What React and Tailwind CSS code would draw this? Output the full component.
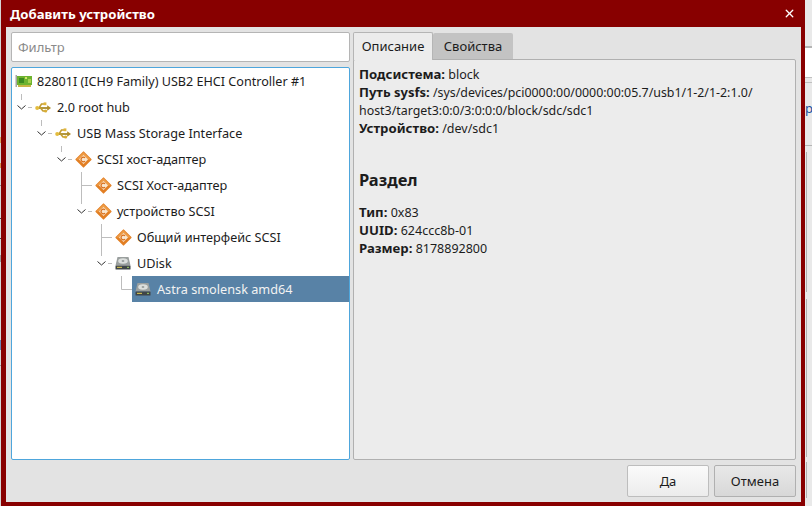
import { X } from 'lucide-react';

const rows = [
  { depth: 0, icon: 'card', label: '82801I (ICH9 Family) USB2 EHCI Controller #1' },
  { depth: 1, mark: 'open', icon: 'usb', label: '2.0 root hub' },
  { depth: 2, mark: 'open', icon: 'usb', label: 'USB Mass Storage Interface' },
  { depth: 3, mark: 'open', icon: 'scsi', label: 'SCSI хост-адаптер' },
  { depth: 4, mark: 'branch', icon: 'scsi', label: 'SCSI Хост-адаптер' },
  { depth: 4, mark: 'open', icon: 'scsi', label: 'устройство SCSI' },
  { depth: 5, mark: 'branch', icon: 'scsi', label: 'Общий интерфейс SCSI' },
  { depth: 5, mark: 'open', icon: 'disk', label: 'UDisk' },
  { depth: 6, mark: 'last', icon: 'disk', label: 'Astra smolensk amd64', selected: true },
];

function CardIcon() {
  return (
    <svg width="17" height="16" viewBox="0 0 17 16" className="-mr-px shrink-0">
      <rect x="0.5" y="2" width="1.5" height="12" fill="#a5a5a5" />
      <rect x="2" y="3" width="15" height="9" fill="#6db32f" />
      <rect x="3" y="12" width="13" height="2" fill="#c9b545" />
      <rect x="4" y="5" width="5" height="5" fill="#3c8a20" />
      <rect x="10" y="4" width="2" height="2" fill="#d8e36a" />
      <rect x="13" y="6" width="3" height="4" fill="#a8d24e" />
    </svg>
  );
}

function UsbIcon() {
  return (
    <svg width="16" height="16" viewBox="0 0 16 16" className="shrink-0">
      <path d="M1 9h12" stroke="#a98c2a" strokeWidth="1.8" fill="none" />
      <path d="M4 9 6.5 5H9M5.5 9l2.5 3H10" stroke="#c39c2e" strokeWidth="1.5" fill="none" />
      <circle cx="2.2" cy="9" r="2" fill="#e3bc3e" />
      <rect x="8.6" y="3.4" width="2.8" height="2.8" fill="#e0b53a" />
      <circle cx="10.6" cy="12" r="1.6" fill="#d9ae35" />
      <path d="M12.2 6.2 16 9 12.2 11.8Z" fill="#b08c28" />
    </svg>
  );
}

function ScsiIcon() {
  return (
    <svg width="17" height="17" viewBox="0 0 17 17" className="-mr-px shrink-0">
      <path d="M8.5 1.2 15.8 8.5 8.5 15.8 1.2 8.5Z" fill="#e27f24" stroke="#e27f24" strokeWidth="1.6" strokeLinejoin="round" />
      <path d="M8.5 1.2 15.8 8.5H1.2Z" fill="#ee9d48" />
      <path d="M8.5 4 13 8.5 8.5 13 4 8.5Z" fill="#f9e6cf" />
      <path d="M10 6.9A2.3 2.3 0 1 0 10 10.1" stroke="#d9701c" strokeWidth="1.3" fill="none" />
    </svg>
  );
}

function DiskIcon() {
  return (
    <svg width="16" height="16" viewBox="0 0 16 16" className="shrink-0">
      <path d="M2.5 2h11l2 8.5H0.5Z" fill="#9a9f9e" />
      <ellipse cx="8" cy="6" rx="4.8" ry="2.8" fill="#dcdfdd" />
      <ellipse cx="8" cy="6" rx="1.4" ry="0.8" fill="#7f8584" />
      <rect x="0.5" y="10.5" width="15" height="4" rx="0.5" fill="#3f4547" />
      <rect x="2" y="11.8" width="5" height="1.2" fill="#c9b84f" />
      <rect x="12" y="11.8" width="2" height="1.2" fill="#8fbb5c" />
    </svg>
  );
}

const icons = { card: CardIcon, usb: UsbIcon, scsi: ScsiIcon, disk: DiskIcon };

// Connector cell to the left of a tree row
function TreeMark({ kind }) {
  return (
    <svg width="20" height="26" viewBox="0 0 20 26" className="shrink-0">
      {kind === 'open' && (
        <>
          <path d="M9.5 0v6M16 13.5h4" stroke="#bdbdbd" fill="none" />
          <path d="M5.5 11.5 9.5 15 13.5 11.5" stroke="#333" fill="none" />
        </>
      )}
      {kind === 'branch' && <path d="M9.5 0v26M9.5 13.5H20" stroke="#bdbdbd" fill="none" />}
      {kind === 'last' && <path d="M9.5 0v13.5H20" stroke="#bdbdbd" fill="none" />}
    </svg>
  );
}

function TreeRow({ row }) {
  const Icon = icons[row.icon];
  return (
    <div className="flex h-[26px] items-stretch">
      {Array.from({ length: Math.max(row.depth - 1, 0) }).map((_, i) => (
        <div key={i} className="w-5 shrink-0" />
      ))}
      {row.depth > 0 && <TreeMark kind={row.mark} />}
      <div
        className={
          row.selected
            ? 'flex flex-1 items-center gap-[6px] pl-[3px] bg-[#5882a6] text-[#f2f2f2]'
            : 'flex flex-1 items-center gap-[6px] pl-[3px] text-[#1c1c1c]'
        }
      >
        <Icon />
        <span className={row.depth === 0 ? 'pt-px text-[12.6px] whitespace-nowrap' : 'text-[12.7px] whitespace-nowrap'}>
          {row.label}
        </span>
      </div>
    </div>
  );
}

function Field({ name, value, small }) {
  return (
    <div>
      <b className={small ? 'text-[13px] leading-none font-bold' : 'text-[13.2px] leading-none font-bold'}>{name}:</b>{' '}
      {value}
    </div>
  );
}

export default function App() {
  return (
    <div className="flex h-[506px] w-[812px] overflow-hidden bg-[#e9e9e9] text-[13px] leading-[18px] font-['Noto_Sans',sans-serif]">
      {/* Strip of the window behind, left */}
      <div className="w-px shrink-0 bg-[#d4d4d4]">
        <div className="mt-[137px] h-[6px] bg-[#d9a25c]" />
        <div className="mt-[20px] h-[5px] bg-[#d9904a]" />
        <div className="mt-[17px] h-px bg-[#8a8a8a]" />
        <div className="mt-[32px] h-px bg-[#444]" />
        <div className="mt-[19px] h-px bg-[#444]" />
        <div className="mt-[16px] h-[7px] bg-[#999]" />
        <div className="mt-[78px] h-[10px] bg-[#6a83b5]" />
        <div className="mt-[15px] h-px bg-[#999]" />
      </div>

      {/* Dialog */}
      <div className="flex w-[804px] shrink-0 flex-col bg-[#880000] pr-1 pb-1 pl-[5px]">
        <div className="flex h-[27px] shrink-0 items-center justify-between pr-[5px] pl-1 text-[13.2px] font-bold text-white">
          <span>Добавить устройство</span>
          <X size={13} strokeWidth={2.5} />
        </div>

        <div className="flex min-h-0 flex-1 flex-col bg-[#e3e3e3] p-[5px]">
          <div className="flex min-h-0 flex-1 gap-[3px]">
            {/* Left column */}
            <div className="flex w-[339px] shrink-0 flex-col gap-[5px]">
              <input
                placeholder="Фильтр"
                readOnly
                className="h-[30px] shrink-0 rounded-[2px] border border-[#b5b5b5] bg-white px-[6px] text-[13px] outline-none placeholder:text-[#8a8a8a]"
              />
              <div className="min-h-0 flex-1 rounded-[2px] border border-[#4ea6dc] bg-white">
                {rows.map((row) => (
                  <TreeRow key={row.label} row={row} />
                ))}
              </div>
            </div>

            {/* Right column */}
            <div className="flex min-w-0 flex-1 flex-col">
              <div className="flex h-[27px] shrink-0 items-end">
                <div className="z-10 -mb-px flex h-[28px] w-[80px] items-center justify-center rounded-t-[2px] border border-b-0 border-[#b5b5b5] bg-[#ececec] pb-0.5 text-[#1c1c1c]">
                  Описание
                </div>
                <div className="flex h-[26px] w-[80px] items-center justify-center rounded-t-[2px] bg-[#c3c3c3] text-[#1c1c1c]">
                  Свойства
                </div>
              </div>
              <div className="min-h-0 flex-1 rounded-[2px] border border-[#b0b0b0] bg-[#ececec] px-[5px] pt-[6px] text-[12.5px] text-[#1c1c1c]">
                <Field name="Подсистема" value="block" />
                <Field
                  small
                  name="Путь sysfs"
                  value={
                    <span className="text-[12.4px]">
                      /sys/devices/pci0000:00/0000:00:05.7/usb1/1-2/1-2:1.0/
                      <br />
                      host3/target3:0:0/3:0:0:0/block/sdc/sdc1
                    </span>
                  }
                />
                <Field name="Устройство" value="/dev/sdc1" />
                <h2 className="mt-[31px] mb-[13px] text-[16.5px] leading-[22px] font-bold">Раздел</h2>
                <Field name="Тип" value="0x83" />
                <Field name="UUID" value="624ccc8b-01" />
                <Field name="Размер" value="8178892800" />
              </div>
            </div>
          </div>

          {/* Dialog buttons */}
          <div className="flex shrink-0 justify-end gap-[5px] pt-[5px]">
            <button className="h-8 w-[82px] rounded-[2px] border border-[#bdbdbd] bg-gradient-to-b from-[#fbfbfb] to-[#ececec] text-[#1c1c1c]">
              Да
            </button>
            <button className="h-8 w-[82px] rounded-[2px] border border-[#b0b0b0] bg-gradient-to-b from-[#e8e8e8] to-[#d8d8d8] text-[#1c1c1c]">
              Отмена
            </button>
          </div>
        </div>
      </div>

      {/* Strip of the window behind, right */}
      <div className="flex-1 overflow-hidden">
        <div className="mt-[46px] h-[2px] bg-[#b5b5b5]" />
        <div className="h-[29px] bg-white" />
        <div className="h-[6px] border-y border-[#c0c0c0] bg-[#e9e9e9]" />
        <div className="mt-[16px] text-[#1c4f9c]">p</div>
        <div className="mt-[28px] h-px bg-[#b5b5b5]" />
        <div className="mt-[6px] ml-px h-[140px] w-px bg-[#b0b0b0]" />
        <div className="mt-[7px] ml-px h-[158px] w-px bg-[#b0b0b0]" />
        <div className="mt-[5px] ml-px h-[36px] w-px bg-[#b0b0b0]" />
      </div>
    </div>
  );
}
